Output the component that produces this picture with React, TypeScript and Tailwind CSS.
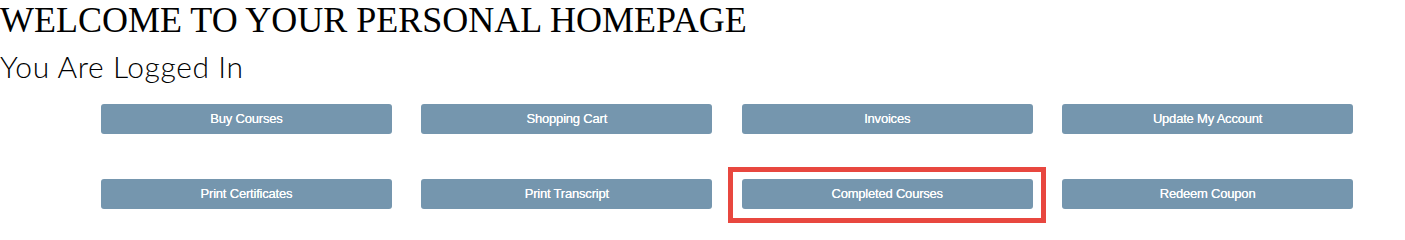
import React from 'react';

const links = [
  'Buy Courses',
  'Shopping Cart',
  'Invoices',
  'Update My Account',
  'Print Certificates',
  'Print Transcript',
  'Completed Courses',
  'Redeem Coupon',
];

export default function App() {
  return (
    <div className="w-[1405px] h-[235px] bg-white overflow-hidden">
      <h1 className="m-0 text-[36px] leading-[40px] font-normal text-black font-['Liberation_Serif',serif]">
        WELCOME TO YOUR PERSONAL HOMEPAGE
      </h1>
      <h2 className="mt-[8px] text-[30px] leading-[36px] tracking-[0.6px] font-light text-black font-['Lato',sans-serif]">
        You Are Logged In
      </h2>

      <div className="ml-[101px] mt-[20px] w-[1252px] grid grid-cols-4 gap-x-[29.5px] gap-y-[45px]">
        {links.map((label) => (
          <div key={label} className="relative">
            <a
              href="#"
              className="flex h-[30px] items-center justify-center rounded-[3px] bg-[#7596ae] text-[13px] font-normal tracking-[-0.2px] text-white [text-shadow:0_0_0.4px_#fff] font-['Liberation_Sans',Arial,sans-serif]"
            >
              {label}
            </a>
            {label === 'Completed Courses' && (
              <div className="pointer-events-none absolute -left-[14px] -right-[13px] -top-[12px] -bottom-[14px] border-[5px] border-[#e8473f]" />
            )}
          </div>
        ))}
      </div>
    </div>
  );
}
